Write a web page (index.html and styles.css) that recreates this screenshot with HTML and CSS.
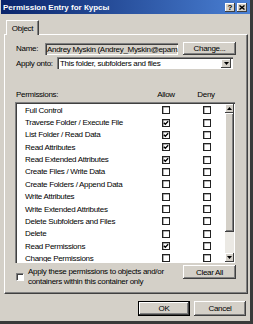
FILE: index.html
```html
<!DOCTYPE html>
<html lang="ru">
<head>
  <meta charset="UTF-8" />
  <meta name="viewport" content="width=device-width, initial-scale=1.0"/>
  <title>Permission Entry for Курсы</title>
  <link rel="stylesheet" href="styles.css">
</head>
<body>
  <div class="window">
    <div class="titlebar">
      <span class="title">Permission Entry for Курсы</span>
      <span class="tbtn help">?</span>
      <span class="tbtn">
        <svg width="6" height="5" viewBox="0 0 6 5"><path d="M0.5 0.5 L5.5 4.5 M5.5 0.5 L0.5 4.5" stroke="#000" stroke-width="1.4"/></svg>
      </span>
    </div>

    <div class="tabs"><div class="tab">Object</div></div>

    <div class="panel">
      <div class="name-row">
        <span class="lbl name-lbl">Name:</span>
        <div class="field">Andrey Myskin (Andrey_Myskin@epam.</div>
        <div class="btn change">Change...</div>
      </div>

      <div class="apply-row">
        <span class="lbl apply-lbl">Apply onto:</span>
        <div class="select">
          <span class="select-text">This folder, subfolders and files</span>
          <span class="drop">
            <svg width="5" height="3" viewBox="0 0 5 3"><path d="M0 0 H5 L2.5 3 Z" fill="#000"/></svg>
          </span>
        </div>
      </div>

      <div class="head">
        <span class="perm-lbl">Permissions:</span>
        <span class="col">Allow</span>
        <span class="col deny-col">Deny</span>
      </div>

      <div class="list">
        <div class="rows">
          <div class="perm"><span>Full Control</span><span class="cb"></span><span class="cb"></span></div>
          <div class="perm"><span>Traverse Folder / Execute File</span><span class="cb on"></span><span class="cb"></span></div>
          <div class="perm"><span>List Folder / Read Data</span><span class="cb on"></span><span class="cb"></span></div>
          <div class="perm"><span>Read Attributes</span><span class="cb on"></span><span class="cb"></span></div>
          <div class="perm"><span>Read Extended Attributes</span><span class="cb on"></span><span class="cb"></span></div>
          <div class="perm"><span>Create Files / Write Data</span><span class="cb"></span><span class="cb"></span></div>
          <div class="perm"><span>Create Folders / Append Data</span><span class="cb"></span><span class="cb"></span></div>
          <div class="perm"><span>Write Attributes</span><span class="cb"></span><span class="cb"></span></div>
          <div class="perm"><span>Write Extended Attributes</span><span class="cb"></span><span class="cb"></span></div>
          <div class="perm"><span>Delete Subfolders and Files</span><span class="cb"></span><span class="cb"></span></div>
          <div class="perm"><span>Delete</span><span class="cb"></span><span class="cb"></span></div>
          <div class="perm"><span>Read Permissions</span><span class="cb on"></span><span class="cb"></span></div>
          <div class="perm"><span>Change Permissions</span><span class="cb"></span><span class="cb"></span></div>
        </div>
        <div class="scroll">
          <div class="sb-btn">
            <svg width="5" height="3" viewBox="0 0 5 3"><path d="M0 3 H5 L2.5 0 Z" fill="#000"/></svg>
          </div>
          <div class="thumb"></div>
          <div class="track"></div>
          <div class="sb-btn">
            <svg width="5" height="3" viewBox="0 0 5 3"><path d="M0 0 H5 L2.5 3 Z" fill="#000"/></svg>
          </div>
        </div>
      </div>

      <div class="bottom">
        <div class="opt">
          <span class="cb plain"></span>
          <span class="note">Apply these permissions to objects and/or<br>containers within this container only</span>
        </div>
        <div class="btn clear">Clear All</div>
      </div>
    </div>

    <div class="actions">
      <div class="btn ok">OK</div>
      <div class="btn">Cancel</div>
    </div>
  </div>

  <script>
    document.querySelectorAll('.cb.on').forEach(function (box) {
      box.innerHTML = '<svg width="6" height="6" viewBox="0 0 6 6"><path d="M0.8 2.8 L2.3 4.3 L5.2 1.2" stroke="#000" stroke-width="1.3" fill="none"/></svg>';
    });
  </script>
</body>
</html>
```

FILE: styles.css
```css
* { box-sizing: border-box; }
body {
  margin: 0;
  background: #d4d0c8;
  font-family: "Liberation Sans", Arial, sans-serif;
  font-size: 8px;
  letter-spacing: -0.3px;
  color: #000;
}
.window {
  width: 253px;
  height: 324px;
  padding-left: 1px;
  background: #d4d0c8;
  border-right: 3px solid #3a3a3a;
  border-bottom: 3px solid #3a3a3a;
}

/* title bar */
.titlebar {
  height: 14px;
  display: flex;
  align-items: center;
  padding: 0 3px 0 2px;
  background: linear-gradient(90deg, #0a246a, #4a80d4);
}
.title {
  flex: 1;
  color: #fff;
  font-weight: bold;
  letter-spacing: 0;
}
.tbtn {
  width: 10px;
  height: 9px;
  margin-left: 2px;
  display: flex;
  align-items: center;
  justify-content: center;
  background: #d4d0c8;
  box-shadow: inset -1px -1px #404040, inset 1px 1px #fff;
  font-weight: bold;
  font-size: 8px;
  line-height: 9px;
  letter-spacing: 0;
}
.help { margin-left: 0; }

/* tab */
.tabs {
  margin-top: 6px;
  padding-left: 5px;
  display: flex;
}
.tab {
  position: relative;
  z-index: 1;
  width: 33px;
  height: 15px;
  margin-bottom: -1px;
  padding-top: 3px;
  text-align: center;
  background: #d4d0c8;
  border-top: 1px solid #fff;
  border-left: 1px solid #fff;
  border-right: 1px solid #404040;
  box-shadow: inset -1px 0 #808080;
}
.panel {
  width: 244px;
  height: 260px;
  margin-left: 3px;
  padding: 7px 0 0 11px;
  border-top: 1px solid #fff;
  border-left: 1px solid #fff;
  border-right: 1px solid #404040;
  border-bottom: 1px solid #404040;
  box-shadow: inset -1px -1px #808080;
}

/* controls */
.btn {
  display: flex;
  align-items: center;
  justify-content: center;
  background: #d4d0c8;
  box-shadow: inset -1px -1px #404040, inset 1px 1px #fff, inset -2px -2px #808080;
}
.ok {
  border: 1px solid #000;
}
.name-row, .apply-row {
  display: flex;
  align-items: center;
}
.name-row { height: 13px; }
.name-lbl { width: 29px; }
.field {
  width: 133px;
  height: 12px;
  padding: 2px 0 0 2px;
  white-space: nowrap;
  overflow: hidden;
  line-height: 9px;
  background: #d4d0c8;
  box-shadow: inset 1px 1px #808080, inset 2px 2px #404040, inset -1px -1px #fff;
}
.change {
  width: 53px;
  height: 13px;
  margin-left: 5px;
}
.apply-row {
  height: 12px;
  margin-top: 2px;
}
.apply-lbl { width: 41px; }
.select {
  width: 176px;
  height: 12px;
  display: flex;
  align-items: center;
  padding: 2px 2px 1px 3px;
  background: #fff;
  box-shadow: inset 1px 1px #808080, inset 2px 2px #404040, inset -1px -1px #fff;
}
.select-text { flex: 1; }
.drop {
  width: 10px;
  height: 9px;
  display: flex;
  align-items: center;
  justify-content: center;
  background: #d4d0c8;
  box-shadow: inset -1px -1px #404040, inset 1px 1px #fff;
}

/* permissions list */
.head {
  display: flex;
  height: 10px;
  margin-top: 21px;
  line-height: 10px;
}
.perm-lbl { width: 138px; }
.col {
  width: 24px;
  text-align: center;
}
.deny-col { margin-left: 16px; }
.list {
  display: flex;
  width: 220px;
  height: 161px;
  margin: 2px 0 0 -1px;
  padding: 2px 1px 1px 2px;
  background: #fff;
  box-shadow: inset 1px 1px #808080, inset 2px 2px #404040, inset -1px -1px #fff;
}
.rows {
  flex: 1;
  overflow: hidden;
}
.perm {
  display: grid;
  grid-template-columns: 145px 41px 8px;
  align-items: center;
  height: 12.36px;
}
.perm span:first-child { padding-left: 8px; white-space: nowrap; }
.cb {
  width: 8px;
  height: 8px;
  display: flex;
  align-items: center;
  justify-content: center;
  background: #fff;
  border: 1px solid #222;
  box-shadow: inset 0.5px 0.5px #666;
}
.cb.plain {
  border-color: #808080 #fff #fff #808080;
  box-shadow: inset 1px 1px #404040;
}
.scroll {
  width: 9px;
  display: flex;
  flex-direction: column;
}
.sb-btn {
  height: 9px;
  display: flex;
  align-items: center;
  justify-content: center;
  background: #d4d0c8;
  box-shadow: inset -1px -1px #404040, inset 1px 1px #fff;
}
.thumb {
  height: 119px;
  background: #d4d0c8;
  box-shadow: inset -1px -1px #404040, inset 1px 1px #fff, inset -2px -2px #808080;
}
.track {
  flex: 1;
  background: #ebe9e4;
}

/* bottom */
.bottom {
  display: flex;
  align-items: flex-start;
  margin-top: 2px;
}
.opt {
  width: 167px;
  display: flex;
  align-items: center;
  gap: 4px;
  margin-top: 2px;
}
.note {
  line-height: 10.4px;
  white-space: nowrap;
}
.clear {
  width: 53px;
  height: 14px;
}
.actions {
  display: flex;
  justify-content: flex-end;
  gap: 4px;
  margin-top: 7px;
  padding-right: 4px;
}
.actions .btn {
  width: 52px;
  height: 15px;
}
```
